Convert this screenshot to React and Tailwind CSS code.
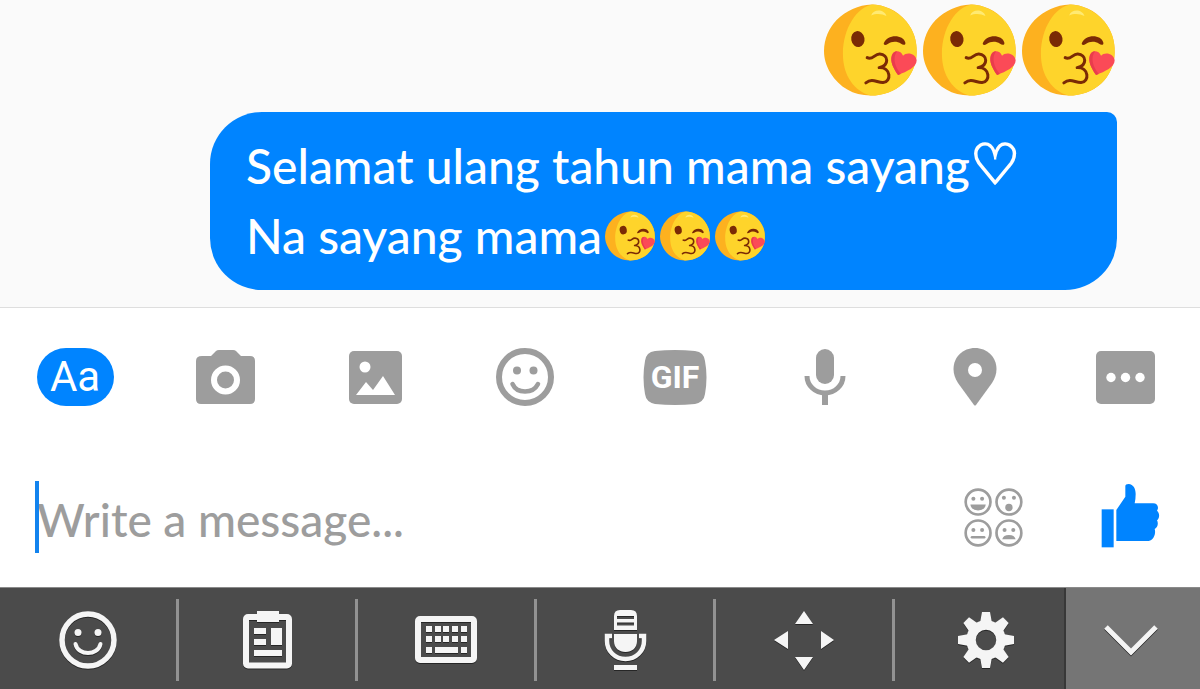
import { useState } from 'react';

const KEY_SHADOW = 'drop-shadow-[0_1px_0_#262626]';

function KissEmoji({ className }) {
  return (
    <svg viewBox="0 0 280 276" className={className} role="img" aria-label="Face blowing a kiss">
      <path d="M143 1C180 1 220 18 248 52C270 80 280 110 279 146C277 222 218 275 140 275C88 275 46 250 20 208C6 184 0 164 0 140C1 104 14 74 38 48C66 20 104 2 143 1Z" fill="#fdb11f" />
      <path d="M147 1C180 2 220 20 248 52C270 80 280 110 279 146C277 222 218 275 140 275C92 262 57 216 57 150C57 74 98 8 147 1Z" fill="#fed42b" />
      <path d="M142 34C148 14 182 14 188 36C174 28 156 28 142 34Z" fill="#ffea72" />
      <ellipse cx="102" cy="105" rx="20" ry="24" fill="#7a2a05" transform="rotate(-10 102 105)" />
      <path d="M180 118C190 90 238 90 245 116C246 124 238 124 232 119C220 111 204 111 192 120C186 124 179 124 180 118Z" fill="#7a2a05" />
      <path d="M130 161C146 170 152 149 168 150C194 152 198 184 166 191C202 190 204 234 178 236C160 237 146 221 126 237" fill="none" stroke="#7a2a05" strokeWidth="9" strokeLinecap="round" strokeLinejoin="round" />
      <path d="M223 213C208 192 199 172 204 155C209 137 231 138 238 155C250 142 277 149 279 169C279 190 250 203 223 213Z" fill="#fb4a57" />
      <path d="M223 213C208 192 199 172 204 155C207 146 214 142 220 142C206 160 212 188 231 210Z" fill="#e93c4c" />
    </svg>
  );
}

function CameraIcon() {
  return (
    <svg viewBox="0 0 59 54" className="w-[59px] h-[54px]" aria-hidden="true">
      <path d="M6 6H15L20 1Q21 0 23 0H37Q39 0 40 1L45 6H54Q59 6 59 11V49Q59 54 54 54H5Q0 54 0 49V11Q0 6 6 6Z" fill="currentColor" />
      <circle cx="29.500" cy="30" r="11.500" fill="none" stroke="#fff" strokeWidth="6" />
    </svg>
  );
}

function PhotoIcon() {
  return (
    <svg viewBox="0 0 53 53" className="w-[53px] h-[53px]" aria-hidden="true">
      <rect width="53" height="53" rx="5" fill="currentColor" />
      <circle cx="16" cy="16" r="5.500" fill="#fff" />
      <path d="M7 44L17 31L24 39L34 25L46 44Z" fill="#fff" />
    </svg>
  );
}

function SmileIcon() {
  return (
    <svg viewBox="0 0 58 58" className="w-[58px] h-[58px]" aria-hidden="true">
      <circle cx="29" cy="29" r="26" fill="none" stroke="currentColor" strokeWidth="6" />
      <circle cx="21" cy="22.500" r="4" fill="currentColor" />
      <circle cx="37.500" cy="22.500" r="4" fill="currentColor" />
      <path d="M16.500 36C21 46 37 46 42 36" fill="none" stroke="currentColor" strokeWidth="4.500" strokeLinecap="round" />
    </svg>
  );
}

function GifIcon() {
  return (
    <span className="relative flex items-center justify-center">
      <svg viewBox="0 0 64 55" className="w-16 h-[55px]" aria-hidden="true">
        <path d="M12 1Q32 -1 52 1Q61 2 62 11Q65 27 62 44Q61 52 52 54Q32 56 12 54Q3 52 2 44Q-1 27 2 11Q3 2 12 1Z" fill="currentColor" />
      </svg>
      <span className="absolute font-['Roboto',sans-serif] text-[32px] leading-none font-bold text-white">GIF</span>
    </span>
  );
}

function MicIcon() {
  return (
    <svg viewBox="0 0 42 56" className="w-[42px] h-14" aria-hidden="true">
      <rect x="12" y="0" width="18" height="35" rx="9" fill="currentColor" />
      <path d="M3 27A18 17 0 0 0 39 27" fill="none" stroke="currentColor" strokeWidth="5" />
      <path d="M21 44V56" stroke="currentColor" strokeWidth="6" />
    </svg>
  );
}

function PinIcon() {
  return (
    <svg viewBox="0 0 44 58" className="w-11 h-[58px]" aria-hidden="true">
      <path d="M22 0C34 0 43.500 9 43.500 21C43.500 26 42 30 39 35L23 57Q22 58 21 57L5 35C2 30 0.500 26 0.500 21C0.500 9 10 0 22 0Z" fill="currentColor" />
      <circle cx="22" cy="22" r="7" fill="#fff" />
    </svg>
  );
}

function MoreIcon() {
  return (
    <svg viewBox="0 0 59 53" className="w-[59px] h-[53px]" aria-hidden="true">
      <rect width="59" height="53" rx="5" fill="currentColor" />
      <circle cx="15" cy="26.500" r="4.700" fill="#fff" />
      <circle cx="29.500" cy="26.500" r="4.700" fill="#fff" />
      <circle cx="44" cy="26.500" r="4.700" fill="#fff" />
    </svg>
  );
}

function FacesIcon() {
  return (
    <svg viewBox="0 0 176 176" className="w-[59px] h-[59px]" aria-hidden="true">
      <g fill="none" stroke="currentColor" strokeWidth="8">
        <circle cx="42" cy="42" r="37" />
        <circle cx="134" cy="42" r="37" />
        <circle cx="42" cy="134" r="37" />
        <circle cx="134" cy="134" r="37" />
        <path d="M24 147H60" strokeLinecap="round" />
      </g>
      <g fill="currentColor">
        <circle cx="28" cy="32" r="6" />
        <circle cx="54" cy="32" r="6" />
        <path d="M19 49H65Q62 67 42 67Q22 67 19 49Z" />
        <circle cx="119" cy="29" r="6" />
        <circle cx="149" cy="29" r="6" />
        <circle cx="134" cy="58" r="11" />
        <circle cx="28" cy="125" r="6" />
        <circle cx="54" cy="125" r="6" />
        <circle cx="121" cy="125" r="6" />
        <circle cx="147" cy="125" r="6" />
        <path d="M114 153Q117 140 134 140Q151 140 154 153Z" />
      </g>
    </svg>
  );
}

function ThumbIcon() {
  return (
    <svg viewBox="0 4 180 198" className="w-[60px] h-[66px]" aria-hidden="true">
      <path d="M5 80H41V194H5Z" fill="currentColor" />
      <path d="M49 175V82L76 42V10Q76 4 86 4C100 5 107 18 107 34Q107 48 104 62H158C172 61 178 74 171 84C180 91 179 108 171 113C176 122 173 134 164 139C168 150 163 172 146 175Z" fill="currentColor" />
    </svg>
  );
}

function KeySmileIcon() {
  return (
    <svg viewBox="0 0 58 58" className={`w-[58px] h-[58px] ${KEY_SHADOW}`} aria-hidden="true">
      <circle cx="29" cy="29" r="26" fill="none" stroke="currentColor" strokeWidth="5.500" />
      <circle cx="19" cy="21.500" r="3.500" fill="currentColor" />
      <circle cx="39" cy="21.500" r="3.500" fill="currentColor" />
      <path d="M16.500 33C19 45 39 45 41.500 33" fill="none" stroke="currentColor" strokeWidth="4" strokeLinecap="round" />
    </svg>
  );
}

function ClipboardIcon() {
  return (
    <svg viewBox="0 0 49 58" className={`w-[49px] h-[58px] ${KEY_SHADOW}`} aria-hidden="true">
      <rect x="3" y="6" width="43" height="48.500" rx="2" fill="none" stroke="currentColor" strokeWidth="6" />
      <path d="M14 0H36V11H14ZM11 17H23V23H11ZM11 28H23V34H11ZM28 17H39V34H28ZM11 39H39V45H11Z" fill="currentColor" />
    </svg>
  );
}

function KeyboardIcon() {
  return (
    <svg viewBox="0 0 62 47" className={`w-[62px] h-[47px] ${KEY_SHADOW}`} aria-hidden="true">
      <rect x="3" y="3" width="56" height="41" rx="2" fill="none" stroke="currentColor" strokeWidth="6" />
      {[11, 20, 28, 37, 46].map(x => (
        <g key={x} fill="currentColor">
          <rect x={x} y="10" width="6" height="6" />
          <rect x={x} y="20" width="6" height="6" />
        </g>
      ))}
      <path d="M11 31H17V37H11ZM20 31H43V37H20ZM46 31H52V37H46Z" fill="currentColor" />
    </svg>
  );
}

function KeyMicIcon() {
  return (
    <svg viewBox="0 0 43 60" className={`w-[43px] h-[60px] ${KEY_SHADOW}`} aria-hidden="true">
      <path d="M16 0H27Q33 0 33 6V20H10V6Q10 0 16 0ZM13 6V9H30V6ZM13 12.500V15.500H30V12.500Z" fill="currentColor" fillRule="evenodd" />
      <path d="M10 24H33V31C33 38 28 42 21.500 42C15 42 10 38 10 31Z" fill="currentColor" />
      <path d="M8 26H3V31C3 41 11 49 21.500 49C32 49 40 41 40 31V26H35" fill="none" stroke="currentColor" strokeWidth="4.500" />
      <path d="M10 55H33V60H10Z" fill="currentColor" />
    </svg>
  );
}

function MoveIcon() {
  return (
    <svg viewBox="0 0 60 60" className={`w-[60px] h-[60px] ${KEY_SHADOW}`} aria-hidden="true">
      <path d="M30 1L39 14H21ZM30 60L39 47H21ZM0 30L14 21V39ZM60 30L47 21V39Z" fill="currentColor" />
    </svg>
  );
}

function GearIcon() {
  return (
    <svg viewBox="0 0 58 58" className={`w-[58px] h-[58px] ${KEY_SHADOW}`} aria-hidden="true">
      <circle cx="29" cy="29" r="15" fill="none" stroke="currentColor" strokeWidth="9.500" />
      {[0, 45, 90, 135, 180, 225, 270, 315].map(angle => (
        <path key={angle} d="M25 1H33L35 12H23Z" fill="currentColor" transform={`rotate(${angle} 29 29)`} />
      ))}
    </svg>
  );
}

const ATTACHMENTS = [
  { label: 'Camera', Icon: CameraIcon },
  { label: 'Photos', Icon: PhotoIcon },
  { label: 'Stickers', Icon: SmileIcon },
  { label: 'GIF', Icon: GifIcon },
  { label: 'Voice clip', Icon: MicIcon },
  { label: 'Location', Icon: PinIcon },
  { label: 'More', Icon: MoreIcon },
];

const KEY_TOOLS = [
  { label: 'Emoji', Icon: KeySmileIcon },
  { label: 'Clipboard', Icon: ClipboardIcon },
  { label: 'Keyboard layout', Icon: KeyboardIcon },
  { label: 'Voice input', Icon: KeyMicIcon },
  { label: 'Move cursor', Icon: MoveIcon },
];

function Messages() {
  return (
    <main className="flex flex-col items-end gap-4 pt-1 pb-[17px] pl-[210px] pr-[83px]">
      <div className="flex gap-[6px] pr-0.5">
        <KissEmoji className="w-[93px] h-[92px]" />
        <KissEmoji className="w-[93px] h-[92px]" />
        <KissEmoji className="w-[93px] h-[92px]" />
      </div>
      <div className="w-full rounded-[52px] rounded-tr-[10px] bg-[#0084ff] px-9 py-[19px] text-[48px] leading-[70px] font-medium text-white">
        <p>
          Selamat ulang tahun mama sayang
          <span className="font-['DejaVu_Sans',sans-serif] text-[56px] leading-none [-webkit-text-stroke:2px_white]">♡</span>
        </p>
        <p className="flex items-center gap-[3px]">
          Na sayang mama
          <span className="flex gap-[5px]">
            <KissEmoji className="w-[50px] h-[50px]" />
            <KissEmoji className="w-[50px] h-[50px]" />
            <KissEmoji className="w-[50px] h-[50px]" />
          </span>
        </p>
      </div>
    </main>
  );
}

function Composer() {
  const [text, setText] = useState('');

  return (
    <section className="border-t border-[#dedede] bg-white pt-10 pb-[34px]">
      <div className="grid grid-cols-8 items-center justify-items-center text-[#9d9d9d]">
        <button type="button" aria-label="Text" className="flex h-[58px] w-[77px] items-center justify-center rounded-full bg-[#0084ff] font-['Roboto',sans-serif] text-[42px] leading-none text-white">
          Aa
        </button>
        {ATTACHMENTS.map(({ label, Icon }) => (
          <button key={label} type="button" aria-label={label}>
            <Icon />
          </button>
        ))}
      </div>

      <div className="mt-[75px] flex items-center pl-[35px] pr-10">
        <div className="relative flex-1">
          <input
            type="text"
            aria-label="Write a message"
            placeholder="Write a message..."
            value={text}
            onChange={e => setText(e.target.value)}
            className="block h-[72px] w-full bg-transparent pt-1 pl-0.5 text-[46px] font-medium text-gray-800 outline-none placeholder:text-[#9d9d9d]"
          />
          {!text && <span className="absolute top-0 left-0 h-full w-1 bg-[#1283ee]" />}
        </div>
        <button type="button" aria-label="Emoji" className="mr-[77px] text-[#9d9d9d]">
          <FacesIcon />
        </button>
        <button type="button" aria-label="Send a like" className="text-[#0084ff]">
          <ThumbIcon />
        </button>
      </div>
    </section>
  );
}

function KeyboardBar() {
  return (
    <footer className="grid h-[102px] grid-cols-[179fr_179fr_179fr_179fr_179fr_171fr_134fr] border-t border-[#8a8a8a] bg-[#4b4b4b] text-[#f5f5f5]">
      {KEY_TOOLS.map(({ label, Icon }) => (
        <div key={label} className="flex items-center pt-0.5">
          <button type="button" aria-label={label} className="flex flex-1 justify-center">
            <Icon />
          </button>
          <span className="h-[82px] w-[3px] bg-[#929292]" />
        </div>
      ))}
      <button type="button" aria-label="Settings" className="flex items-center justify-center border-r-2 border-[#383838] pt-0.5 pl-3">
        <GearIcon />
      </button>
      <button type="button" aria-label="Hide keyboard" className="flex items-center justify-center bg-[#757575] pt-0.5 pr-1">
        <svg viewBox="0 0 54 32" className={`w-[54px] h-8 ${KEY_SHADOW}`} aria-hidden="true">
          <path d="M2 3L27 28L52 3" fill="none" stroke="currentColor" strokeWidth="5" />
        </svg>
      </button>
    </footer>
  );
}

export default function App() {
  return (
    <div className="min-h-screen bg-[#fafafa] font-['Lato',sans-serif]">
      <Messages />
      <Composer />
      <KeyboardBar />
    </div>
  );
}
